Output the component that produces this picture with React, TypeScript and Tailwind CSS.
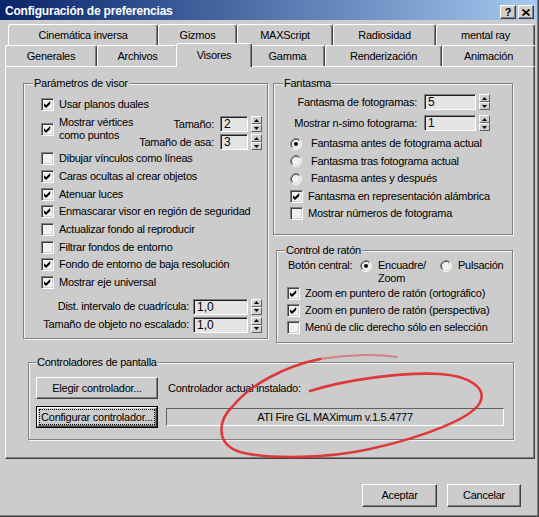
import React from "react";

const BG = "bg-[#cccccc]";

function Check({ checked }: { checked?: boolean }) {
  return (
    <span className="w-[13px] h-[13px] shrink-0 border border-t-[#808080] border-l-[#808080] border-b-white border-r-white bg-[#f1f1f1] shadow-[inset_1px_1px_0_#404040,inset_-1px_-1px_0_#d0d0d0] flex items-center justify-center">
      {checked && (
        <svg width="9" height="9" viewBox="0 0 9 9" className="block">
          <path d="M1 3.3 L3 5.3 L7.2 1.1 L7.2 3.9 L3 8.1 L1 6.1 Z" fill="#000" />
        </svg>
      )}
    </span>
  );
}

function Radio({ checked }: { checked?: boolean }) {
  return (
    <svg width="12" height="12" viewBox="0 0 12 12" className="shrink-0 block">
      <circle cx="6" cy="6" r="5" fill="#f1f1f1" />
      <path d="M2.11 9.89 A5.5 5.5 0 0 1 9.89 2.11" stroke="#808080" fill="none" />
      <path d="M9.89 2.11 A5.5 5.5 0 0 1 2.11 9.89" stroke="#ffffff" fill="none" />
      <path d="M2.82 9.18 A4.5 4.5 0 0 1 9.18 2.82" stroke="#505050" fill="none" />
      <path d="M9.18 2.82 A4.5 4.5 0 0 1 2.82 9.18" stroke="#d8d8d8" fill="none" />
      {checked && <circle cx="6" cy="6" r="2" fill="#000" />}
    </svg>
  );
}

function Spin() {
  return (
    <div className="w-[11px] h-[16px] shrink-0 flex flex-col ml-[3px]">
      <div className="h-[8px] border border-t-white border-l-white border-r-[#606060] border-b-[#606060] bg-[#d0d0d0] flex items-center justify-center">
        <svg width="5" height="3" viewBox="0 0 5 3" className="block">
          <path d="M2.5 0 L5 3 L0 3 Z" fill="#000" />
        </svg>
      </div>
      <div className="h-[8px] border border-t-white border-l-white border-r-[#606060] border-b-[#606060] bg-[#d0d0d0] flex items-center justify-center">
        <svg width="5" height="3" viewBox="0 0 5 3" className="block">
          <path d="M0 0 L5 0 L2.5 3 Z" fill="#000" />
        </svg>
      </div>
    </div>
  );
}

function Field({ value, className }: { value: string; className: string }) {
  return (
    <div
      className={
        "h-[16px] shrink-0 border border-t-[#808080] border-l-[#808080] border-b-white border-r-white shadow-[inset_1px_1px_0_#202020] bg-[#e4e4e4] pl-[3px] text-[12px] leading-[14px] tracking-normal " +
        className
      }
    >
      {value}
    </div>
  );
}

function Group({
  title,
  className,
  titleClass,
  children,
}: {
  title: string;
  className: string;
  titleClass: string;
  children?: React.ReactNode;
}) {
  return (
    <div className={"shrink-0 border border-[#808080] shadow-[1px_1px_0_#f4f4f4,inset_1px_1px_0_#f4f4f4] " + className}>
      <div className={"-mt-[7px] px-[1px] w-fit bg-[#cccccc] leading-[13px] " + titleClass}>{title}</div>
      {children}
    </div>
  );
}

function CheckRow({ checked, label, className }: { checked?: boolean; label: string; className: string }) {
  return (
    <div className={"flex items-center gap-[5px] " + className}>
      <Check checked={checked} />
      <span className="whitespace-nowrap">{label}</span>
    </div>
  );
}

function RadioRow({ checked, label, className }: { checked?: boolean; label: string; className: string }) {
  return (
    <div className={"flex items-center gap-[9px] " + className}>
      <Radio checked={checked} />
      <span className="whitespace-nowrap">{label}</span>
    </div>
  );
}

function Tab({ label, className, selected }: { label: string; className: string; selected?: boolean }) {
  return (
    <div
      className={
        "shrink-0 flex items-center justify-center border-t border-l border-r border-t-white border-l-white border-r-[#404040] rounded-t-[3px] shadow-[inset_-1px_0_0_#808080] whitespace-nowrap " +
        (selected ? "relative z-10 -mt-[2px] -mb-[1px] -mx-[2px] h-[24px] bg-[#cccccc] " : "h-[21px] ") +
        className
      }
    >
      {label}
    </div>
  );
}

function Button({ label, className }: { label: string; className: string }) {
  return (
    <div
      className={
        "shrink-0 border border-t-white border-l-white border-b-[#404040] border-r-[#404040] shadow-[inset_-1px_-1px_0_#808080] flex items-center justify-center whitespace-nowrap " +
        className
      }
    >
      {label}
    </div>
  );
}

function TitleBtn({ children }: { children: React.ReactNode }) {
  return (
    <div className="w-[16px] h-[14px] bg-[#d4d0c8] border border-t-white border-l-white border-b-[#404040] border-r-[#404040] shadow-[inset_-1px_-1px_0_#808080] flex items-center justify-center text-black font-bold text-[11px] leading-[12px] tracking-normal">
      {children}
    </div>
  );
}

export default function App() {
  return (
    <div className="relative w-[539px] h-[517px] border-r border-b border-[#404040] bg-[#cccccc] text-black text-[11px] leading-[13px] tracking-[-0.25px] font-['Liberation_Sans',Arial,sans-serif] overflow-hidden">
      <div className="h-full border-r border-b border-[#808080] flex flex-col">
        {/* Title bar */}
        <div className="h-[20px] shrink-0 flex items-start bg-linear-to-r from-[#0a246a] to-[#a6caf0]">
          <div className="mt-[4px] ml-[5px] text-white font-bold text-[12px] leading-[14px] tracking-[-0.2px]">
            Configuración de preferencias
          </div>
          <div className="ml-auto mt-[5px] mr-[3px] flex gap-[2px]">
            <TitleBtn>?</TitleBtn>
            <TitleBtn>
              <svg width="8" height="7" viewBox="0 0 8 7" className="block">
                <path d="M0.5 0.5 L7.5 6.5 M7.5 0.5 L0.5 6.5" stroke="#000" strokeWidth="1.6" />
              </svg>
            </TitleBtn>
          </div>
        </div>

        {/* Tabs row 1 */}
        <div className="flex mt-[4px] ml-[8px]">
          <Tab label="Cinemática inversa" className="w-[150px]" />
          <Tab label="Gizmos" className="w-[79px]" />
          <Tab label="MAXScript" className="w-[96px]" />
          <Tab label="Radiosidad" className="w-[103px]" />
          <Tab label="mental ray" className="w-[99px]" />
        </div>
        {/* Tabs row 2 */}
        <div className="flex ml-[5px]">
          <Tab label="Generales" className="w-[92px]" />
          <Tab label="Archivos" className="w-[81px]" />
          <Tab label="Visores" className="w-[76px]" selected />
          <Tab label="Gamma" className="w-[75px]" />
          <Tab label="Renderización" className="w-[117px]" />
          <Tab label="Animación" className="w-[93px]" />
        </div>

        {/* Tab panel */}
        <div className="ml-[5px] w-[530px] h-[393px] shrink-0 border border-t-white border-l-white border-r-[#404040] border-b-[#404040] shadow-[inset_-1px_-1px_0_#808080]">
          <div className="flex items-start">
            {/* Left group */}
            <Group title="Parámetros de visor" className="w-[245px] h-[256px] mt-[16px] ml-[17px]" titleClass="ml-[9px]">
              <div className="pl-[17px] pr-[5px] mt-[5px]">
                <CheckRow checked label="Usar planos duales" className="h-[18px]" />
                <div className="h-[37px] flex items-start">
                  <div className="mt-[10px]">
                    <Check checked />
                  </div>
                  <div className="ml-[5px] pt-[3px] leading-[13px] whitespace-nowrap">
                    Mostrar vértices
                    <br />
                    como puntos
                  </div>
                  <div className="ml-auto pt-[3px] flex flex-col gap-[2px] items-end">
                    <div className="flex items-center h-[16px]">
                      <span>Tamaño:</span>
                      <Field value="2" className="w-[28px] ml-[6px]" />
                      <Spin />
                    </div>
                    <div className="flex items-center h-[16px]">
                      <span>Tamaño de asa:</span>
                      <Field value="3" className="w-[28px] ml-[6px]" />
                      <Spin />
                    </div>
                  </div>
                </div>
                <CheckRow label="Dibujar vínculos como líneas" className="h-[17.7px]" />
                <CheckRow checked label="Caras ocultas al crear objetos" className="h-[17.7px]" />
                <CheckRow checked label="Atenuar luces" className="h-[17.7px]" />
                <CheckRow checked label="Enmascarar visor en región de seguridad" className="h-[17.7px]" />
                <CheckRow label="Actualizar fondo al reproducir" className="h-[17.7px]" />
                <CheckRow label="Filtrar fondos de entorno" className="h-[17.7px]" />
                <CheckRow checked label="Fondo de entorno de baja resolución" className="h-[17.7px]" />
                <CheckRow checked label="Mostrar eje universal" className="h-[17.7px]" />
                <div className="mt-[7px] flex flex-col gap-[2px]">
                  <div className="flex items-center justify-end h-[16px]">
                    <span className="whitespace-nowrap">Dist. intervalo de cuadrícula:</span>
                    <Field value="1,0" className="w-[55px] ml-[4px]" />
                    <Spin />
                  </div>
                  <div className="flex items-center justify-end h-[16px]">
                    <span className="whitespace-nowrap">Tamaño de objeto no escalado:</span>
                    <Field value="1,0" className="w-[55px] ml-[4px]" />
                    <Spin />
                  </div>
                </div>
              </div>
            </Group>

            {/* Right column */}
            <div className="ml-[5px] w-[240px] mt-[16px] flex flex-col">
              <Group title="Fantasma" className="w-[240px] h-[152px]" titleClass="ml-[9px]">
                <div className="pr-[22px] mt-[4px] flex flex-col gap-[5px]">
                  <div className="flex items-center justify-end h-[16px]">
                    <span className="whitespace-nowrap">Fantasma de fotogramas:</span>
                    <Field value="5" className="w-[52px] ml-[7px]" />
                    <Spin />
                  </div>
                  <div className="flex items-center justify-end h-[16px]">
                    <span className="whitespace-nowrap">Mostrar n-simo fotograma:</span>
                    <Field value="1" className="w-[52px] ml-[7px]" />
                    <Spin />
                  </div>
                </div>
                <div className="mt-[4px] pl-[16px]">
                  <RadioRow checked label="Fantasma antes de fotograma actual" className="h-[17.5px]" />
                  <RadioRow label="Fantasma tras fotograma actual" className="h-[17.5px]" />
                  <RadioRow label="Fantasma antes y después" className="h-[17.5px]" />
                  <CheckRow checked label="Fantasma en representación alámbrica" className="h-[17.5px]" />
                  <CheckRow label="Mostrar números de fotograma" className="h-[17.5px]" />
                </div>
              </Group>

              <Group title="Control de ratón" className="mt-[15px] ml-[3px] w-[237px] h-[93px]" titleClass="ml-[8px]">
                <div className="mt-[2px] pl-[11px] flex items-start leading-[13px]">
                  <span className="w-[72px] whitespace-nowrap">Botón central:</span>
                  <div className="mt-[1px]">
                    <Radio checked />
                  </div>
                  <div className="ml-[6px] w-[62px]">
                    Encuadre/
                    <br />
                    Zoom
                  </div>
                  <div className="mt-[1px]">
                    <Radio />
                  </div>
                  <div className="ml-[6px]">Pulsación</div>
                </div>
                <div className="pl-[10px]">
                  <CheckRow checked label="Zoom en puntero de ratón (ortográfico)" className="h-[17px]" />
                  <CheckRow checked label="Zoom en puntero de ratón (perspectiva)" className="h-[17px]" />
                  <CheckRow label="Menú de clic derecho sólo en selección" className="h-[17px]" />
                </div>
              </Group>
            </div>
          </div>

          {/* Display drivers */}
          <Group title="Controladores de pantalla" className="mt-[19px] ml-[22px] w-[486px] h-[78px]" titleClass="ml-[7px]">
            <div className="mt-[8px] pl-[7px] pr-[9px] flex flex-col gap-[7px]">
              <div className="flex items-center h-[22px]">
                <Button label="Elegir controlador..." className="w-[122px] h-[22px]" />
                <span className="ml-[10px] whitespace-nowrap">Controlador actual instalado:</span>
              </div>
              <div className="flex items-center h-[22px]">
                <div className="w-[122px] h-[22px] shrink-0 border border-black">
                  <div className="h-full border border-t-white border-l-white border-b-[#404040] border-r-[#404040] shadow-[inset_-1px_-1px_0_#808080] p-[1px]">
                    <div className="h-full border border-dotted border-black flex items-center justify-center whitespace-nowrap">
                      Configurar controlador...
                    </div>
                  </div>
                </div>
                <div className="ml-[8px] flex-1 h-[18px] border border-t-[#606060] border-l-[#606060] border-b-white border-r-white flex items-center justify-center whitespace-nowrap">
                  ATI Fire GL MAXimum v.1.5.4777
                </div>
              </div>
            </div>
          </Group>
        </div>

        {/* Bottom buttons */}
        <div className="mt-[25px] flex justify-end gap-[10px] pr-[16px]">
          <Button label="Aceptar" className="w-[75px] h-[23px]" />
          <Button label="Cancelar" className="w-[74px] h-[23px]" />
        </div>
      </div>

      {/* Red hand-drawn ellipse annotation */}
      <svg className="absolute inset-0 pointer-events-none" width="539" height="517" viewBox="0 0 539 517">
        <path
          d="M310 391 C 345 380, 400 372, 440 374 C 470 376, 485 388, 481 400 C 476 418, 420 438, 370 449 C 330 458, 270 460, 240 452 C 215 444, 218 420, 233 406 C 250 385, 285 366, 320 359"
          fill="none"
          stroke="#e0282a"
          strokeWidth="2.6"
          strokeLinecap="round"
          opacity="0.9"
        />
        <path
          d="M320 359 C 350 354, 380 354, 397 357"
          fill="none"
          stroke="#e0282a"
          strokeWidth="2"
          strokeLinecap="round"
          opacity="0.45"
        />
      </svg>
    </div>
  );
}
